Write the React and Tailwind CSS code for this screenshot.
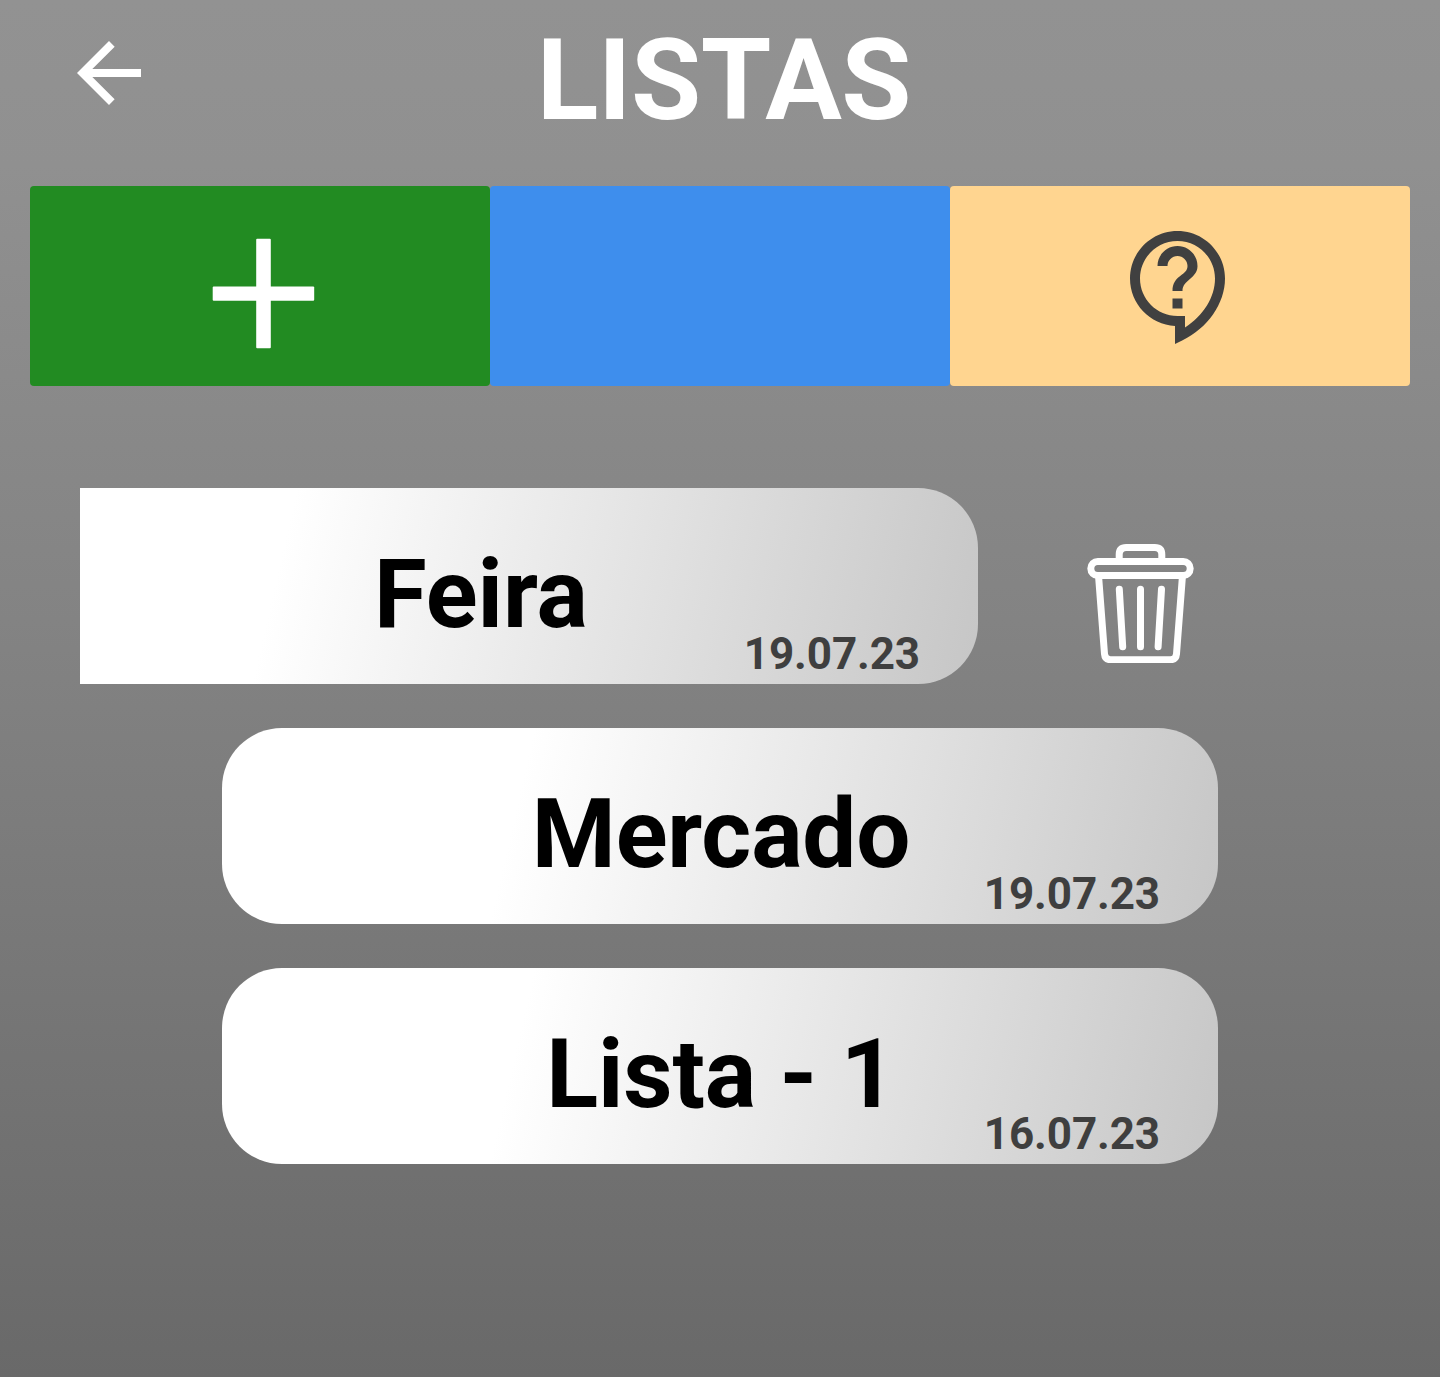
import React from "react";

function DateLabel({ children }) {
  return (
    <span className="absolute right-[58px] bottom-[4px] text-[44px] leading-[52px] font-bold tracking-[-0.1px] text-[#3f3f3f]">
      {children}
    </span>
  );
}

function ListCard({ title, date }) {
  return (
    <div className="relative flex h-[196px] w-[996px] items-center justify-center rounded-[60px] bg-[linear-gradient(103deg,#fff_30%,#c6c6c6_100%)]">
      <span className="pt-[16px] pl-[2px] text-[96px] leading-none font-bold tracking-[-0.2px] text-black">{title}</span>
      <DateLabel>{date}</DateLabel>
    </div>
  );
}

export default function App() {
  return (
    <main className="flex h-[1377px] w-[1440px] flex-col overflow-hidden bg-[linear-gradient(180deg,#929292_0%,#909090_12%,#838383_45%,#696969_100%)] font-['Roboto',sans-serif]">
      <header className="relative flex h-[186px] justify-center pl-[8px]">
        <button aria-label="Voltar" className="absolute top-[41px] left-[77px]">
          <svg width="64" height="64" viewBox="4 4 16 16" fill="#fff" className="block">
            <path d="M20 11H7.83l5.59-5.59L12 4l-8 8 8 8 1.41-1.41L7.83 13H20v-2z" />
          </svg>
        </button>
        <h1 className="pt-[13px] text-[114px] leading-[135px] font-bold tracking-[-0.4px] text-white">LISTAS</h1>
      </header>
      <nav className="mx-[30px] grid h-[200px] grid-cols-3">
        <button aria-label="Adicionar" className="flex rounded-[4px] bg-[#228b22] pt-[52px] pl-[182px]">
          <svg width="103" height="112" viewBox="0 0 103 112" fill="#fff">
            <rect x="44.200" y="0.700" width="14.600" height="109.600" rx="1" />
            <rect x="0.700" y="48.500" width="101.500" height="14.200" rx="1" />
          </svg>
        </button>
        <button aria-label="Listas" className="rounded-[4px] bg-[#3e8eed]" />
        <button aria-label="Ajuda" className="flex rounded-[4px] bg-[#ffd590] pt-[45px] pl-[180px]">
          <svg width="95" height="113" viewBox="2 1 19 22.600" fill="#404040">
            <path d="M11 23.590v-3.600c-5.010-.260-9-4.420-9-9.490C2 5.260 6.260 1 11.500 1S21 5.260 21 10.500c0 4.950-3.440 9.930-8.570 12.400l-1.430.690zM11.500 3C7.360 3 4 6.360 4 10.500S7.360 18 11.500 18H13v2.300c3.640-2.300 6-6.080 6-9.800C19 6.360 15.640 3 11.500 3zm-1 11.500h2v2h-2v-2zm2-1.500h-2c0-3.250 3-3 3-5 0-1.100-.900-2-2-2s-2 .900-2 2h-2c0-2.210 1.790-4 4-4s4 1.790 4 4c0 2.500-3 2.750-3 5z" />
          </svg>
        </button>
      </nav>
      <section className="flex flex-col items-center gap-[44px] pt-[102px]">
        <div className="flex w-full pl-[80px]">
          <div className="relative flex h-[196px] w-[898px] items-center justify-center rounded-r-[60px] bg-[linear-gradient(103deg,#fff_23%,#c6c6c6_100%)]">
            <span className="pt-[16px] pr-[96px] text-[96px] leading-none font-bold text-black">Feira</span>
            <DateLabel>19.07.23</DateLabel>
          </div>
          <button aria-label="Excluir" className="mt-[56px] ml-[109px] h-[119px]">
            <svg width="107" height="119" viewBox="0 0 107 119" fill="none" stroke="#fff" strokeWidth="7" strokeLinecap="round" strokeLinejoin="round">
              <path d="M32.200 15v-4.500q0-7 7-7h28.600q7 0 7 7V15" />
              <rect x="3.800" y="17.500" width="99.400" height="14" rx="7" />
              <path d="M11.700 34l5.800 76q.5 5.700 6 5.700h60q5.500 0 6-5.700l5.800-76" />
              <path d="M32.300 45.300l3.400 57.400M53.500 45.300v57.400M74.500 45.300l-3.400 57.400" />
            </svg>
          </button>
        </div>
        <ListCard title="Mercado" date="19.07.23" />
        <ListCard title="Lista - 1" date="16.07.23" />
      </section>
    </main>
  );
}
